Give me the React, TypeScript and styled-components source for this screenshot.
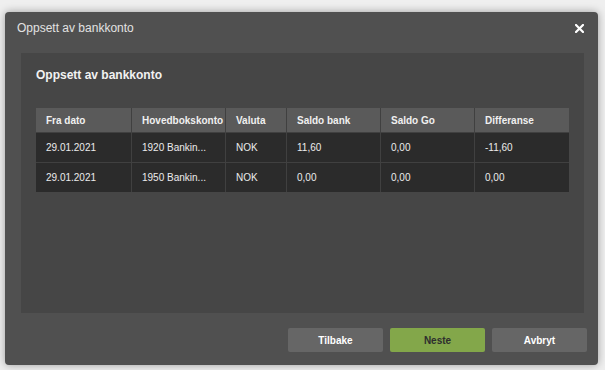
import React from "react";
import styled, { createGlobalStyle } from "styled-components";

const Global = createGlobalStyle`
  html, body { margin: 0; padding: 0; background: #efefef; }
  body { font-family: "Liberation Sans", Arial, sans-serif; }
  * { box-sizing: border-box; }
`;

const Page = styled.div`
  width: 605px;
  height: 370px;
  padding: 12px 7px 5px 5px;
`;

const Dialog = styled.div`
  width: 593px;
  height: 353px;
  background: #505050;
  border-radius: 4px;
  box-shadow: 0 0 8px rgba(0, 0, 0, 0.35);
  display: flex;
  flex-direction: column;
  padding: 0 14px 12px 16px;
`;

const Header = styled.div`
  height: 41px;
  display: flex;
  align-items: center;
  justify-content: space-between;
  margin-left: -4px;
  padding-bottom: 9px;
`;

const Title = styled.div`
  color: #e2e2e2;
  font-size: 12px;
`;

const Close = styled.button`
  border: none;
  background: none;
  padding: 0;
  width: 9px;
  height: 9px;
  display: flex;
  cursor: pointer;
`;

const Panel = styled.div`
  background: #464646;
  height: 260px;
  padding: 15px 15px 0 15px;
`;

const PanelTitle = styled.div`
  color: #f2f2f2;
  font-size: 12px;
  font-weight: bold;
  height: 40px;
  line-height: 14px;
`;

const Table = styled.div`
  display: grid;
  grid-template-columns: 95px 93px 60px 93px 93px 94px;
  grid-template-rows: 24px 29px 29px;
  gap: 1px;
  background: #404040;
  width: 533px;
`;

const HeadCell = styled.div`
  background: #5a5a5a;
  color: #f0f0f0;
  font-size: 10px;
  font-weight: bold;
  display: flex;
  align-items: center;
  padding-left: 10px;
  white-space: nowrap;
`;

const Cell = styled.div`
  background: #2b2b2b;
  color: #ececec;
  font-size: 10px;
  display: flex;
  align-items: center;
  padding-left: 10px;
  white-space: nowrap;
`;

const Footer = styled.div`
  display: flex;
  justify-content: flex-end;
  gap: 7px;
  margin-top: 15px;
  margin-right: -3px;
`;

const Button = styled.button<{ $primary?: boolean }>`
  width: 95px;
  height: 24px;
  border: none;
  border-radius: 2px;
  background: ${(p) => (p.$primary ? "#83a74a" : "#666666")};
  color: ${(p) => (p.$primary ? "#2e2e2e" : "#ffffff")};
  font-family: "Liberation Sans", Arial, sans-serif;
  font-size: 10px;
  font-weight: bold;
  cursor: pointer;
`;

const headers = ["Fra dato", "Hovedbokskonto", "Valuta", "Saldo bank", "Saldo Go", "Differanse"];
const rows = [
  ["29.01.2021", "1920 Bankin...", "NOK", "11,60", "0,00", "-11,60"],
  ["29.01.2021", "1950 Bankin...", "NOK", "0,00", "0,00", "0,00"],
];

export default function App() {
  return (
    <>
      <Global />
      <Page>
        <Dialog>
          <Header>
            <Title>Oppsett av bankkonto</Title>
            <Close aria-label="Lukk">
              <svg width="9" height="9" viewBox="0 0 9 9">
                <path d="M1 1 L8 8 M8 1 L1 8" stroke="#ffffff" strokeWidth="2.2" strokeLinecap="square" />
              </svg>
            </Close>
          </Header>
          <Panel>
            <PanelTitle>Oppsett av bankkonto</PanelTitle>
            <Table>
              {headers.map((h) => (
                <HeadCell key={h}>{h}</HeadCell>
              ))}
              {rows.map((r, i) =>
                r.map((c, j) => <Cell key={`${i}-${j}`}>{c}</Cell>)
              )}
            </Table>
          </Panel>
          <Footer>
            <Button>Tilbake</Button>
            <Button $primary>Neste</Button>
            <Button>Avbryt</Button>
          </Footer>
        </Dialog>
      </Page>
    </>
  );
}
